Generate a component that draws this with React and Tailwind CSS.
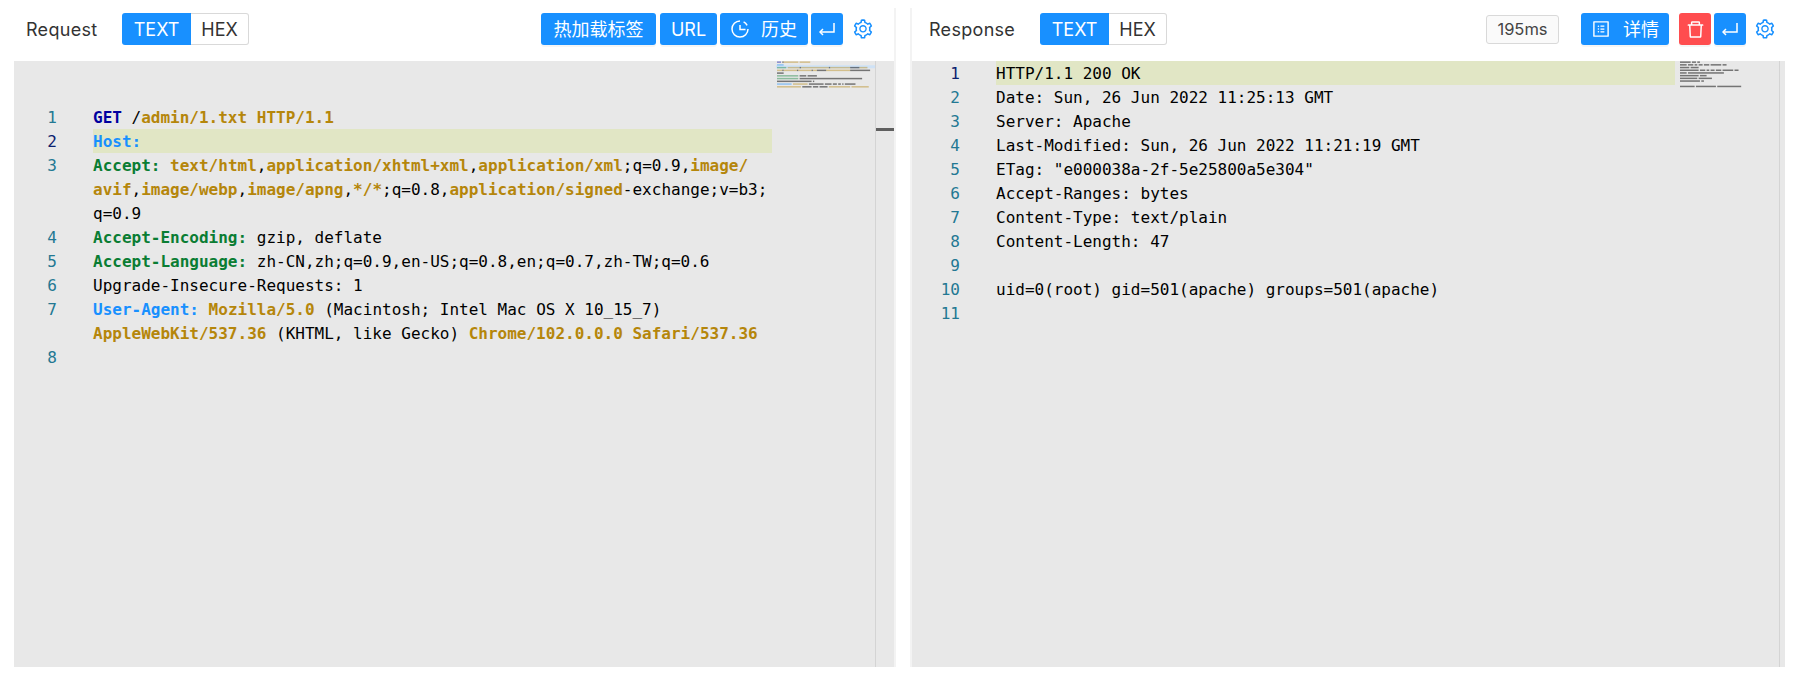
import React from "react";
import { AiOutlineSetting, AiOutlineProfile, AiOutlineDelete } from "react-icons/ai";

const G = "#b5860b", K = "#000000", N = "#0a7d33", B = "#1890ff", D = "#00009f";
const kw = (t, c) => ({ t, c, b: true });
const tx = (t) => ({ t, c: K, b: false });

const requestLines = [
  { n: 1, s: [kw("GET", D), tx(" /"), kw("admin/1.txt HTTP/1.1", G)] },
  { n: 2, active: true, s: [kw("Host:", B)] },
  { n: 3, s: [kw("Accept:", N), tx(" "), kw("text/html", G), tx(","), kw("application/xhtml+xml", G), tx(","), kw("application/xml", G), tx(";q=0.9,"), kw("image/", G)] },
  { s: [kw("avif", G), tx(","), kw("image/webp", G), tx(","), kw("image/apng", G), tx(","), kw("*/*", G), tx(";q=0.8,"), kw("application/signed", G), tx("-exchange;v=b3;")] },
  { s: [tx("q=0.9")] },
  { n: 4, s: [kw("Accept-Encoding:", N), tx(" gzip, deflate")] },
  { n: 5, s: [kw("Accept-Language:", N), tx(" zh-CN,zh;q=0.9,en-US;q=0.8,en;q=0.7,zh-TW;q=0.6")] },
  { n: 6, s: [tx("Upgrade-Insecure-Requests: 1")] },
  { n: 7, s: [kw("User-Agent:", B), tx(" "), kw("Mozilla/5.0", G), tx(" (Macintosh; Intel Mac OS X 10_15_7)")] },
  { s: [kw("AppleWebKit/537.36", G), tx(" (KHTML, like Gecko) "), kw("Chrome/102.0.0.0", G), tx(" "), kw("Safari/537.36", G)] },
  { n: 8, s: [] },
];

const responseLines = [
  "HTTP/1.1 200 OK",
  "Date: Sun, 26 Jun 2022 11:25:13 GMT",
  "Server: Apache",
  "Last-Modified: Sun, 26 Jun 2022 11:21:19 GMT",
  'ETag: "e000038a-2f-5e25800a5e304"',
  "Accept-Ranges: bytes",
  "Content-Type: text/plain",
  "Content-Length: 47",
  "",
  "uid=0(root) gid=501(apache) groups=501(apache)",
  "",
].map((t, i) => ({ n: i + 1, active: i === 0, s: t ? [tx(t)] : [] }));

function EnterIcon() {
  return (
    <svg width="16" height="18" viewBox="0 0 16 18" fill="none" stroke="currentColor" strokeWidth="1.5">
      <path d="M15 3V12H1" />
      <path d="M4 9L1 12L4 15" />
    </svg>
  );
}

function HistoryIcon() {
  return (
    <svg width="18" height="18" viewBox="0 0 18 18" fill="none" stroke="currentColor" strokeWidth="1.5">
      <path d="M9 1A8 8 0 1 0 17 9" />
      <path d="M9 5V9.6H14.5" />
      <path d="M12.6 1.9A8 8 0 0 1 16.1 5.4" />
    </svg>
  );
}

function Btn({ className = "", children }) {
  return (
    <div className={"h-8 flex-none flex items-center justify-center rounded-[3px] text-white shadow-[0_2px_0_rgba(0,0,0,0.04)] " + className}>
      {children}
    </div>
  );
}

function Toggle() {
  return (
    <div className="flex h-8 flex-none">
      <div className="w-[69px] flex items-center justify-center rounded-l-[3px] bg-[#1890ff] text-white">TEXT</div>
      <div className="w-[58px] flex items-center justify-center rounded-r-[3px] border border-l-0 border-[#d9d9d9] bg-white text-[#333333]">HEX</div>
    </div>
  );
}

function Minimap({ lines, width, step, highlight }) {
  return (
    <svg width={width} height="60" className="block">
      {highlight !== undefined && <rect x="0" y={1.5 + highlight * step} width={width} height="3" fill="#cfe2f6" />}
      {lines.map((l, i) => {
        let col = 0;
        const out = [];
        l.s.forEach((seg, j) => {
          const words = seg.t.split(/( )/);
          words.forEach((w, k) => {
            if (w.trim()) {
              out.push(
                <rect key={j + "-" + k} x={1 + col * 1.33} y={0.4 + i * step} width={w.length * 1.33} height="1.5" fill={seg.c} opacity={seg.c === K ? 0.5 : 0.42} />
              );
            }
            col += w.length;
          });
        });
        return <g key={i}>{out}</g>;
      })}
    </svg>
  );
}

function Code({ lines, gutter, numPad, topPad }) {
  return (
    <div className={"flex-1 min-w-0 pr-1 " + topPad}>
      {lines.map((l, i) => (
        <div key={i} className="flex h-6 leading-[25px] whitespace-pre">
          <div className={"flex-none text-right " + gutter + " " + numPad + " " + (l.active ? "text-[#0b216f]" : "text-[#237893]")}>{l.n ?? ""}</div>
          <div className={"flex-1 min-w-0 " + (l.active ? "bg-[#e1e6c5]" : "")}>
            {l.s.map((s, j) => (
              <span key={j} className={s.b ? "font-bold" : ""} style={{ color: s.c }}>{s.t}</span>
            ))}
          </div>
        </div>
      ))}
    </div>
  );
}

const uiFont = "font-['Inter','Noto_Sans_CJK_SC',sans-serif]";

export default function App() {
  return (
    <div className={"flex h-[682px] w-[1798px] overflow-hidden bg-white pt-2 pb-[15px] text-[#333333] " + uiFont}>
      {/* Request */}
      <div className="flex w-[896px] flex-none flex-col border-r-2 border-[#f3f3f3] pl-[14px]">
        <div className="flex h-[53px] flex-none items-center pb-[11px] pl-3 pr-[20px] text-[18px]">
          <div className="w-[96px] flex-none tracking-[0.3px]">Request</div>
          <Toggle />
          <div className="ml-auto flex items-center gap-[3px]">
            <Btn className="w-[115px] mr-px bg-[#1890ff]">热加载标签</Btn>
            <Btn className="w-[57px] bg-[#1890ff]">URL</Btn>
            <Btn className="w-[88px] gap-3 bg-[#1890ff]"><HistoryIcon /><span>历史</span></Btn>
            <Btn className="w-[32px] bg-[#1890ff]"><EnterIcon /></Btn>
            <AiOutlineSetting className="ml-[6px] text-[#1890ff]" size={22} />
          </div>
        </div>
        <div className="flex min-h-0 flex-1 bg-[#e8e8e8] font-['DejaVu_Sans_Mono',monospace] text-[16px]">
          <Code lines={requestLines} gutter="w-[79px]" numPad="pr-[36px]" topPad="pt-11" />
          <div className="w-[99px] flex-none"><Minimap lines={requestLines} width={99} step={2.74} highlight={1} /></div>
          <div className="w-[19px] flex-none border-l border-[#d4d4d4]">
            <div className="mt-[67px] h-[3px] bg-[#5f5f5f]" />
          </div>
        </div>
      </div>

      {/* Response */}
      <div className="ml-[14px] flex flex-1 flex-col border-l-2 border-[#f3f3f3] pr-[13px]">
        <div className="flex h-[53px] flex-none items-center pb-[11px] pl-[17px] pr-[9px] text-[18px]">
          <div className="w-[111px] flex-none tracking-[0.3px]">Response</div>
          <Toggle />
          <div className="ml-auto flex items-center">
            <div className="mr-[22px] flex h-[29px] w-[73px] items-center justify-center rounded-[3px] border border-[#d9d9d9] bg-[#fafafa] text-[16.5px] text-[#444444]">195ms</div>
            <Btn className="w-[88px] gap-3 mr-[10px] bg-[#1890ff]"><AiOutlineProfile size={20} /><span>详情</span></Btn>
            <Btn className="w-[32px] mr-[3px] bg-[#ff4d4f]"><AiOutlineDelete size={21} /></Btn>
            <Btn className="w-[32px] bg-[#1890ff]"><EnterIcon /></Btn>
            <AiOutlineSetting className="ml-[8px] text-[#1890ff]" size={22} />
          </div>
        </div>
        <div className="flex min-h-0 flex-1 bg-[#e8e8e8] font-['DejaVu_Sans_Mono',monospace] text-[16px]">
          <Code lines={responseLines} gutter="w-[84px]" numPad="pr-[36px]" topPad="" />
          <div className="w-[100px] flex-none"><Minimap lines={responseLines} width={100} step={2.7} /></div>
          <div className="w-[6px] flex-none border-l border-[#d4d4d4]" />
        </div>
      </div>
    </div>
  );
}
